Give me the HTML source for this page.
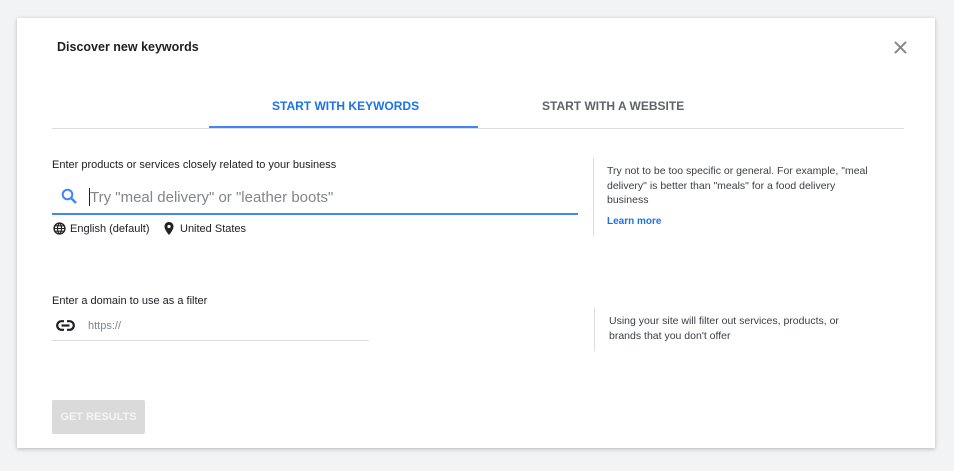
<!DOCTYPE html>
<html><head><style>
body{margin:0;width:954px;height:471px;background:#f1f3f4;font-family:"Liberation Sans",Arial,sans-serif;position:relative;overflow:hidden}
.card{position:absolute;left:17px;top:18px;width:918px;height:430px;background:#fff;box-shadow:0 1px 4px rgba(0,0,0,.25)}
.a{position:absolute;white-space:nowrap}
</style></head><body>
<div class="card"></div>
<div class="a" style="left:57px;top:40px;font-size:12.5px;font-weight:bold;color:#202124">Discover new keywords</div>
<svg class="a" style="left:894px;top:41px" width="13" height="13" viewBox="0 0 14 14"><path d="M1 1L13 13M13 1L1 13" stroke="#888" stroke-width="2.2"/></svg>
<div class="a" style="left:272px;top:99px;font-size:12px;font-weight:bold;color:#1a73e8">START WITH KEYWORDS</div>
<div class="a" style="left:542px;top:99px;font-size:12px;font-weight:bold;color:#5f6368">START WITH A WEBSITE</div>
<div class="a" style="left:52px;top:128px;width:852px;height:1px;background:#dadce0"></div>
<div class="a" style="left:209px;top:126px;width:269px;height:2px;background:#4285f4"></div>
<div class="a" style="left:52px;top:159px;font-size:11px;color:#202124">Enter products or services closely related to your business</div>
<svg class="a" style="left:61px;top:188px" width="17" height="17" viewBox="0 0 17 17"><circle cx="6.5" cy="6.5" r="4.8" fill="none" stroke="#4285f4" stroke-width="2"/><path d="M10 10L15 15" stroke="#4285f4" stroke-width="2.4"/></svg>
<div class="a" style="left:89px;top:188px;width:1px;height:18px;background:#202124"></div>
<div class="a" style="left:90px;top:189px;font-size:15px;color:#80868b">Try "meal delivery" or "leather boots"</div>
<div class="a" style="left:52px;top:213px;width:526px;height:2px;background:#4285f4"></div>
<svg class="a" style="left:53px;top:222px" width="13" height="13" viewBox="0 0 12 12"><circle cx="6" cy="6" r="5" fill="none" stroke="#202124" stroke-width="1.3"/><path d="M1 6H11M6 1C3.5 3.5 3.5 8.5 6 11M6 1C8.5 3.5 8.5 8.5 6 11M2 3.5H10M2 8.5H10" fill="none" stroke="#202124" stroke-width="1"/></svg>
<div class="a" style="left:70px;top:223px;font-size:11px;color:#202124">English (default)</div>
<svg class="a" style="left:164px;top:222px" width="10" height="13" viewBox="0 0 10 13"><path d="M5 0C2.2 0 0.5 2 0.5 4.5C0.5 8 5 13 5 13S9.5 8 9.5 4.5C9.5 2 7.8 0 5 0Z" fill="#202124"/><circle cx="5" cy="4.5" r="1.6" fill="#fff"/></svg>
<div class="a" style="left:180px;top:223px;font-size:11px;color:#202124">United States</div>
<div class="a" style="left:593px;top:158px;width:1px;height:78px;background:#dadce0"></div>
<div class="a" style="left:607px;top:164px;font-size:10.5px;line-height:14.5px;color:#3c4043">Try not to be too specific or general. For example, "meal<br>delivery" is better than "meals" for a food delivery<br>business</div>
<div class="a" style="left:607px;top:216px;font-size:10px;font-weight:bold;color:#1a73e8">Learn more</div>
<div class="a" style="left:52px;top:295px;font-size:11px;color:#202124">Enter a domain to use as a filter</div>
<svg class="a" style="left:56px;top:320px" width="19" height="11" viewBox="0 0 19 11"><rect x="1.2" y="1.2" width="16.6" height="8.6" rx="4.3" fill="none" stroke="#202124" stroke-width="2.2"/><path d="M5.5 5.5H13.5" stroke="#202124" stroke-width="2.2"/><rect x="8" y="0" width="3" height="3" fill="#fff"/><rect x="8" y="8" width="3" height="3" fill="#fff"/></svg>
<div class="a" style="left:88px;top:320px;font-size:11px;color:#80868b">https://</div>
<div class="a" style="left:52px;top:340px;width:317px;height:1px;background:#dadce0"></div>
<div class="a" style="left:594px;top:308px;width:1px;height:43px;background:#dadce0"></div>
<div class="a" style="left:609px;top:314px;font-size:10.5px;line-height:14.5px;color:#3c4043">Using your site will filter out services, products, or<br>brands that you don't offer</div>
<div class="a" style="left:52px;top:400px;width:93px;height:34px;background:#dadada;border-radius:2px;color:#f4f4f4;font-size:11px;font-weight:bold;line-height:34px;text-align:center">GET RESULTS</div>
</body></html>
